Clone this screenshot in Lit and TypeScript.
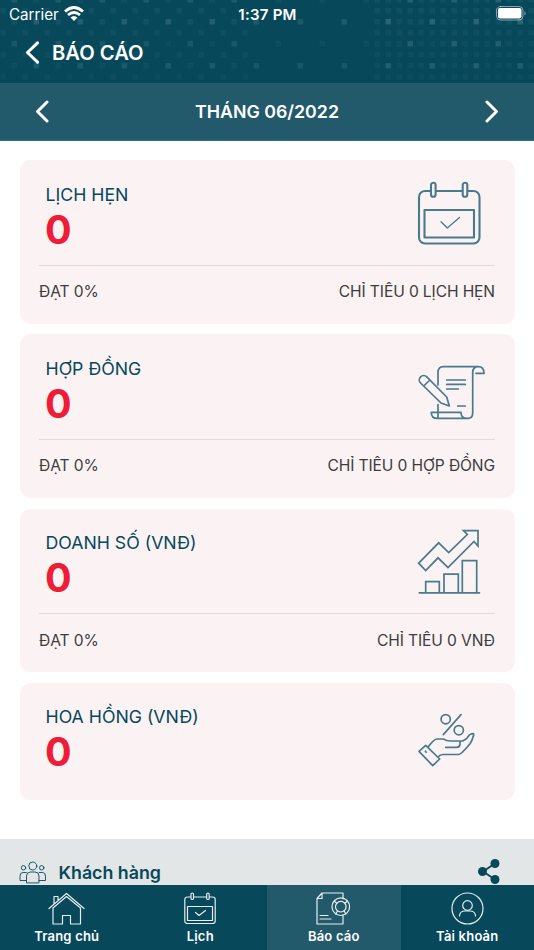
import { LitElement, html, svg, css } from "lit";
import { customElement } from "lit/decorators.js";

const calendar = svg`
  <rect x="1" y="9" width="60.500" height="52.500" rx="6"/>
  <rect class="solid" x="13" y=".7" width="4.600" height="14" rx="2.300"/>
  <rect class="solid" x="44.700" y=".7" width="4.600" height="14" rx="2.300"/>
  <rect x="6.500" y="28" width="49.500" height="27.500"/>
  <path class="fine" d="M23 39.700l6.300 6.300 12.200-10.500"/>`;

const contract = svg`
  <path d="M20 29V16.500q0-5.800 5.500-5.800H60.500q5.500 0 5.500 6.700H58M60.500 10.700q-5.800 0-5.800 6V57q0 5.400-5 5.400H19.300q-6 0-6-6H43q0 6 6 6M20 48.700V62.400"/>
  <path d="M28.700 24H47.300M28.700 28.400H47.300M28.700 33H40.300M39.700 50H47.300"/>
  <path d="M2.600 27a4.300 4.300 0 0 1 6.200-6.200L28.700 41 31.300 50 23 47zM6.700 29l5.200-5"/>`;

const growth = svg`
  <path stroke-linejoin="miter" d="M.7 32.200L20.700 11.800 30.700 21.500 49.300 3.500 45.500-.3H60V15L56 10.500 30 36.500 20 26.800 7.700 39.500z"/>
  <path stroke-linejoin="miter" d="M7.700 61.800V50.700H21.300V61.800M26 61.800V43.200H40.300V61.800M44.300 61.800V29.700H58.700V61.800M1.300 61.800H61.500"/>`;

const commission = svg`
  <circle cx="27.700" cy="14.200" r="4.600"/><circle cx="40.800" cy="25.200" r="4.600"/>
  <path d="M43 9.600L25.300 29.600M1 46.300L7.700 40.300 21.700 54 14.700 60.600z"/>
  <path d="M10.300 41.600Q16 34.500 18.500 34H25.300Q29 36 32 36H44.700Q47.500 34.300 48.700 33.500L51.300 30Q53 28.400 55.300 28.600 56.300 29.500 55 32 54 36 52 38.800 49 42.500 46.500 45 42.500 49.500 40.300 49.500H24.700Q22 49.700 20.300 51.800M42 36.600V39.500Q41.500 42.300 38.700 42.300H27.700M7.400 46.200l.8 1"/>`;

const people = svg`
  <circle cx="13.800" cy="5" r="4"/><circle cx="4.500" cy="6.800" r="2.200"/><circle cx="22.700" cy="6.800" r="2.200"/>
  <path d="M7.500 21.500V15q0-4 4-4h4.500q4 0 4 4v6.500zM7.500 19.500H1V15q0-3.500 3-3.500h3.300M20 19.500H26.500V15q0-3.500-3-3.500h-3.300"/>`;

const house = svg`
  <path d="M1 16.500L18.500 1.500 36 16.500M5 16V32H14.500V23.500H22.500V32H32.500V16L18.500 4.500zM6 12.200V4.500H10V8.800"/>`;

const dayTab = svg`
  <rect x=".8" y="5" width="30.400" height="26.500" rx="2.500"/>
  <rect class="solid" x="7" y="1" width="2.500" height="6.500" rx="1.250"/>
  <rect class="solid" x="22.700" y="1" width="2.500" height="6.500" rx="1.250"/>
  <rect x="3.500" y="14.500" width="25" height="14"/><path d="M11.500 20.500l3.500 3 6.500-5"/>`;

const reportTab = svg`
  <path d="M27 7V1H6L1 6.500V32H27V23M6 1V6.500H1M4 23.500h8M4 27H15"/>
  <circle cx="24.800" cy="14.700" r="8.800"/><circle cx="24.800" cy="14.700" r="5.300"/>
  <path d="M20.800 11.200l-2.500-2M28.800 11.200l2.500-2M21.500 19l-1.800 3M28.100 19l1.800 3"/>`;

const accountTab = svg`
  <circle cx="16.500" cy="16.500" r="15.500"/><circle cx="16.500" cy="13.500" r="4.800"/>
  <path d="M8.500 24q0-5 6-5h4q6 0 6 5"/>`;

const cards = [
  { title: "LỊCH HẸN", goal: "CHỈ TIÊU 0 LỊCH HẸN", icon: calendar, cls: "calendar" },
  { title: "HỢP ĐỒNG", goal: "CHỈ TIÊU 0 HỢP ĐỒNG", icon: contract, cls: "" },
  { title: "DOANH SỐ (VNĐ)", goal: "CHỈ TIÊU 0 VNĐ", icon: growth, cls: "" },
  { title: "HOA HỒNG (VNĐ)", goal: "", icon: commission, cls: "" },
];

const tabs = [
  { label: "Trang chủ", icon: house, w: 37 },
  { label: "Lịch", icon: dayTab, w: 32 },
  { label: "Báo cáo", icon: reportTab, w: 35, active: true },
  { label: "Tài khoản", icon: accountTab, w: 33 },
];

/** Decorative grid of squares behind the header, fading downwards. */
function dots() {
  const out = [];
  for (let row = 0; row < 8; row++) {
    const y = row * 11 - 3;
    const fade = 1 - row * 0.05;
    for (let col = 0; col < 49; col++) {
      const x = 0.5 + col * 11;
      const dense = x > 370;
      let alpha = dense ? 0.055 : 0;
      if (row % 4 === 0) {
        if (col % 4 === 1) alpha = x < 240 ? 0.12 : dense ? 0.16 : 0.05;
        else if (col % 4 === 3 && x < 240) alpha = 0.05;
      } else if (row % 4 === 2) {
        if (col % 4 === 3) alpha = dense ? 0.19 : x < 240 ? 0.16 : 0.13;
        else if (col % 4 === 1 && x < 240) alpha = 0.06;
      } else if (col % 2 === 0 && x < 250) alpha = 0.055;
      if (alpha) out.push(svg`<rect x=${x} y=${y} width="5.500" height="5.500" fill-opacity=${(alpha * fade).toFixed(3)}/>`);
    }
  }
  return out;
}

@customElement("app-root")
export class AppRoot extends LitElement {
  static styles = css`
    :host { display: flex; flex-direction: column; width: 534px; height: 950px; overflow: hidden; background: #fff;
      font-family: Inter, "Liberation Sans", sans-serif; color: #07485b; }
    * { box-sizing: border-box; }
    svg { display: block; flex: none; fill: none; stroke: currentColor; stroke-linecap: round; stroke-linejoin: round; }
    .header { position: relative; height: 83px; flex: none; background: #07485b; color: #fff; overflow: hidden; }
    .dots { position: absolute; inset: 0; fill: #d5e6e6; stroke: none; }
    .status { position: relative; display: grid; grid-template-columns: 1fr auto 1fr; align-items: center; height: 28px; padding: 0 8px 0 9px; font-size: 15.200px; }
    .carrier { display: flex; align-items: center; gap: 5px; }
    .clock { font-weight: 600; font-size: 15px; letter-spacing: .25px; }
    .battery { justify-self: end; margin-right: -1px; margin-top: -1px; }
    .wifi { stroke-width: 2.800; stroke-linecap: butt; margin-top: -2px; }
    .heading { position: relative; display: flex; align-items: center; height: 48px; padding-left: 25px; gap: 13px; font-size: 20.200px; font-weight: 600; }
    .chevron { stroke-width: 3; }
    .month { display: flex; align-items: center; justify-content: space-between; height: 58px; flex: none; padding: 0 35px;
      background: #225a6b; border-bottom: 1px solid #2f6c82; color: #fff; font-size: 17.800px; font-weight: 600; }
    .content { flex: 1; min-height: 0; display: flex; flex-direction: column; overflow: hidden; }
    .cards { display: flex; flex-direction: column; gap: 10.500px; padding: 19px 19.500px 0; }
    .card { height: 163.750px; flex: none; border-radius: 11px; background: #faf2f3; padding: 0 19.500px; }
    .short { height: 117px; }
    .top { height: 104.700px; display: flex; justify-content: space-between; padding: 22px 9px 0 6.500px; }
    .name { font-size: 17.700px; line-height: 24px; padding-top: .5px; }
    .value { color: #ee1c36; font-weight: 700; font-size: 39.500px; line-height: 46px; margin-left: -.5px; }
    .picture { width: 68px; height: 68px; stroke-width: 1.700; color: #4a7a8b; overflow: visible; }
    .calendar { stroke-width: 2.100; }
    .solid { fill: #faf2f3; }
    .fine { stroke-width: 1.300; }
    .bottom { display: flex; justify-content: space-between; border-top: 1.500px solid #e1dcde; padding-top: 15.500px; font-size: 15.600px; letter-spacing: -.12px; line-height: 22px; color: #3d3d3d; }
    .customers { display: flex; align-items: center; height: 67px; margin-top: 39px; flex: none; padding: 0 34px 0 19px; background: #e2e6e6; font-size: 17.800px; font-weight: 600; }
    .people { stroke-width: .9; margin-right: 11.500px; }
    .share { margin-left: auto; fill: currentColor; stroke-width: 2; }
    .tabs { display: grid; grid-template-columns: repeat(4, 1fr); height: 65px; flex: none; background: #07485b; color: #fff; }
    .tab { display: flex; flex-direction: column; align-items: center; padding-top: 7px; gap: 1px; font-size: 13px; font-weight: 600; line-height: 20px; letter-spacing: .2px; }
    .tab svg { stroke-width: 1.200; opacity: .9; }
    .tab .solid { fill: #07485b; }
    .active { background: #225a6b; }
  `;

  render() {
    return html`
      <div class="header">
        <svg class="dots" width="534" height="83">${dots()}</svg>
        <div class="status">
          <div class="carrier"><span>Carrier</span>
            <svg class="wifi" width="20" height="15" viewBox="0 0 20 15"><path d="M1 5.500Q10-2.500 19 5.500M4 9q6-5 12 0"/><path d="M6.500 11.500q3.500-3 7 0L10 15z" fill="currentColor" stroke="none"/></svg>
          </div>
          <span class="clock">1:37 PM</span>
          <svg class="battery" width="31" height="15" viewBox="0 0 31 15"><rect x=".5" y=".5" width="26.500" height="13.500" rx="4" stroke-opacity=".5"/><rect x="2" y="2" width="23.500" height="10.500" rx="2" fill="currentColor" stroke="none"/><path d="M28.500 5q2.500 2.250 0 4.500z" fill="currentColor" stroke="none" opacity=".5"/></svg>
        </div>
        <div class="heading">
          <svg class="chevron" width="14" height="23" viewBox="0 0 14 23"><path d="M12.500 1.800L2.500 11.500l10 9.700"/></svg>
          <span>BÁO CÁO</span>
        </div>
      </div>
      <div class="month">
        <svg class="chevron" width="14" height="23" viewBox="0 0 14 23"><path d="M12 2L2.500 11.500 12 21"/></svg>
        <span>THÁNG 06/2022</span>
        <svg class="chevron" width="14" height="23" viewBox="0 0 14 23"><path d="M2 2l9.500 9.500L2 21"/></svg>
      </div>
      <div class="content">
        <div class="cards">
          ${cards.map((c) => html`
            <div class="card ${c.goal ? "" : "short"}">
              <div class="top">
                <div><div class="name">${c.title}</div><div class="value">0</div></div>
                <svg class="picture ${c.cls}" viewBox="0 0 68 68">${c.icon}</svg>
              </div>
              ${c.goal ? html`<div class="bottom"><span>ĐẠT 0%</span><span>${c.goal}</span></div>` : ""}
            </div>`)}
        </div>
        <div class="customers">
          <svg class="people" width="28" height="23" viewBox="0 0 28 23">${people}</svg>
          <span>Khách hàng</span>
          <svg class="share" width="22" height="26" viewBox="0 0 22 26"><path fill="none" d="M17 4.500L5 12.500l12 8"/><g stroke="none"><circle cx="17" cy="4.500" r="4.500"/><circle cx="4.500" cy="12.500" r="4.500"/><circle cx="17" cy="20.500" r="4.500"/></g></svg>
        </div>
      </div>
      <div class="tabs">
        ${tabs.map((t) => html`<div class="tab ${t.active ? "active" : ""}">
          <svg width=${t.w} height="33" viewBox="0 0 ${t.w} 33">${t.icon}</svg><span>${t.label}</span></div>`)}
      </div>`;
  }
}
